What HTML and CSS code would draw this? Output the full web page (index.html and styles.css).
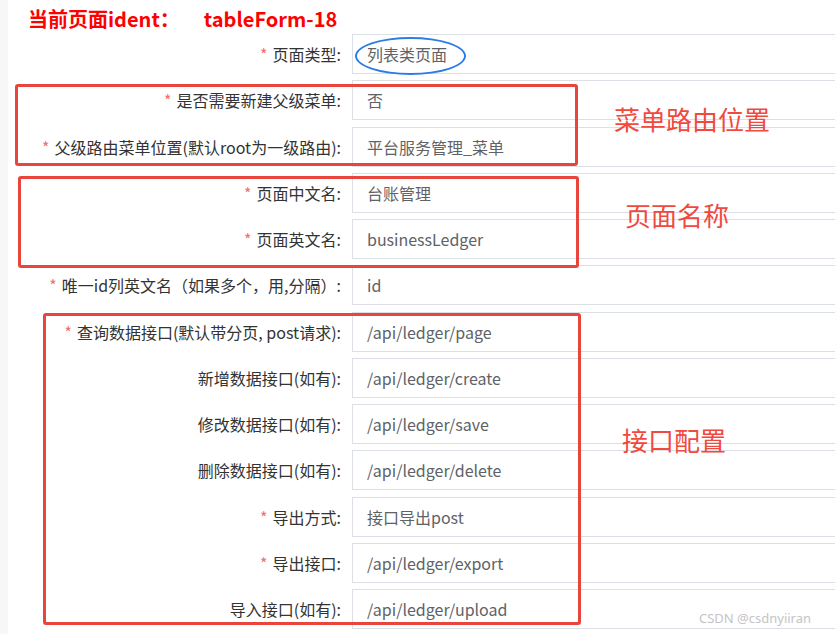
FILE: index.html
```html
<!DOCTYPE html>
<html lang="zh-CN">
<head>
    <meta charset="UTF-8">
    <meta name="viewport" content="width=device-width, initial-scale=1.0">
    <title>tableForm-18</title>
    <link rel="stylesheet" href="styles.css">
</head>
<body>
    <div class="page">
        <h1 class="ident">
            <span>当前页面ident：</span>
            <span class="ident-value">tableForm-18</span>
        </h1>

        <form class="config-form">
            <div class="form-row">
                <label class="form-label required">页面类型:</label>
                <div class="form-input">列表类页面</div>
            </div>
            <div class="form-row">
                <label class="form-label required">是否需要新建父级菜单:</label>
                <div class="form-input">否</div>
            </div>
            <div class="form-row">
                <label class="form-label required">父级路由菜单位置(默认root为一级路由):</label>
                <div class="form-input">平台服务管理_菜单</div>
            </div>
            <div class="form-row">
                <label class="form-label required">页面中文名:</label>
                <div class="form-input">台账管理</div>
            </div>
            <div class="form-row">
                <label class="form-label required">页面英文名:</label>
                <div class="form-input">businessLedger</div>
            </div>
            <div class="form-row">
                <label class="form-label required">唯一id列英文名（如果多个，用,分隔）:</label>
                <div class="form-input">id</div>
            </div>
            <div class="form-row">
                <label class="form-label required">查询数据接口(默认带分页, post请求):</label>
                <div class="form-input">/api/ledger/page</div>
            </div>
            <div class="form-row">
                <label class="form-label">新增数据接口(如有):</label>
                <div class="form-input">/api/ledger/create</div>
            </div>
            <div class="form-row">
                <label class="form-label">修改数据接口(如有):</label>
                <div class="form-input">/api/ledger/save</div>
            </div>
            <div class="form-row">
                <label class="form-label">删除数据接口(如有):</label>
                <div class="form-input">/api/ledger/delete</div>
            </div>
            <div class="form-row">
                <label class="form-label required">导出方式:</label>
                <div class="form-input">接口导出post</div>
            </div>
            <div class="form-row">
                <label class="form-label required">导出接口:</label>
                <div class="form-input">/api/ledger/export</div>
            </div>
            <div class="form-row">
                <label class="form-label">导入接口(如有):</label>
                <div class="form-input">/api/ledger/upload</div>
            </div>
        </form>

        <!-- annotations drawn over the screenshot -->
        <div class="mark-ellipse"></div>
        <div class="mark-box box-menu"></div>
        <div class="mark-box box-name"></div>
        <div class="mark-box box-api"></div>
        <div class="mark-note note-menu">菜单路由位置</div>
        <div class="mark-note note-name">页面名称</div>
        <div class="mark-note note-api">接口配置</div>
        <div class="watermark">CSDN @csdnyiiran</div>
    </div>
</body>
</html>
```

FILE: styles.css
```css
* {
    margin: 0;
    padding: 0;
    box-sizing: border-box;
}

body {
    font-family: 'Noto Sans CJK SC', 'Noto Sans', sans-serif;
    background: #fff;
    overflow: hidden;
}

.page {
    position: relative;
    width: 835px;
    height: 634px;
    overflow: hidden;
    border-left: 8px solid #f7f7f8;
}

.ident {
    height: 34px;
    padding-left: 20px;
    padding-top: 4px;
    display: flex;
    align-items: center;
    gap: 24px;
    color: #ff0000;
    font-size: 20px;
    font-weight: bold;
    line-height: 1;
}

.config-form {
    display: flex;
    flex-direction: column;
    gap: 6.25px;
}

.form-row {
    display: flex;
    align-items: center;
    height: 40px;
}

.form-label {
    flex-shrink: 0;
    width: 344px;
    padding-right: 11px;
    text-align: right;
    color: #333;
    font-size: 16px;
    white-space: nowrap;
}

.form-label.required::before {
    content: '*';
    color: #f56c6c;
    margin-right: 5px;
}

.form-input {
    flex-shrink: 0;
    width: 500px;
    height: 40px;
    border: 1px solid #dcdfe6;
    padding-left: 14px;
    display: flex;
    align-items: center;
    color: #606266;
    font-size: 16px;
}

.mark-ellipse {
    position: absolute;
    left: 347px;
    top: 37px;
    width: 111px;
    height: 38px;
    border: 2.5px solid #2b7de6;
    border-radius: 50%;
}

.mark-box {
    position: absolute;
    border: 3px solid #e8463d;
    border-radius: 3px;
}

.box-menu {
    left: 7px;
    top: 84px;
    width: 563px;
    height: 82px;
}

.box-name {
    left: 10px;
    top: 176px;
    width: 561px;
    height: 92px;
}

.box-api {
    left: 35px;
    top: 313px;
    width: 538px;
    height: 312px;
}

.mark-note {
    position: absolute;
    color: #f04a3f;
    font-size: 26px;
    line-height: 1;
}

.note-menu {
    left: 606px;
    top: 106px;
}

.note-name {
    left: 617px;
    top: 202px;
}

.note-api {
    left: 614px;
    top: 427px;
}

.watermark {
    position: absolute;
    left: 691px;
    top: 609px;
    color: #c4c4c4;
    font-size: 13px;
    font-family: 'Noto Sans', sans-serif;
}
```
